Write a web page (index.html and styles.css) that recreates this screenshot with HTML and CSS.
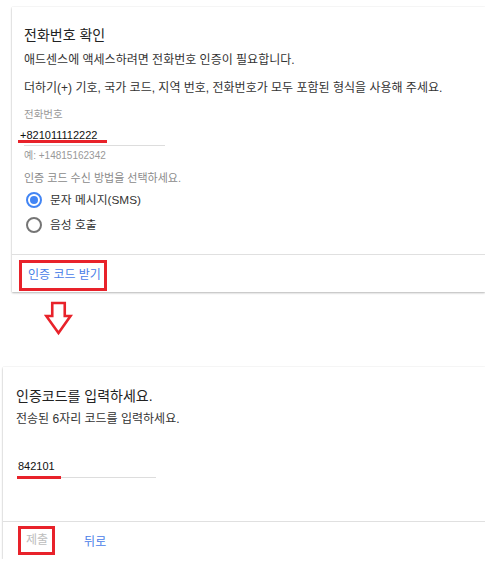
FILE: index.html
```html
<!DOCTYPE html>
<html lang="ko">
<head>
<meta charset="utf-8">
<title>전화번호 확인</title>
<link rel="stylesheet" href="styles.css">
</head>
<body>
  <section class="card card-phone">
    <div class="card-body">
      <h1 class="card-title">전화번호 확인</h1>
      <p class="text first">애드센스에 액세스하려면 전화번호 인증이 필요합니다.</p>
      <p class="text second">더하기(+) 기호, 국가 코드, 지역 번호, 전화번호가 모두 포함된 형식을 사용해 주세요.</p>
      <div class="field-label">전화번호</div>
      <div class="field field-phone"><span class="value mark-phone">+821011112222</span></div>
      <div class="hint">예: +14815162342</div>
      <div class="prompt">인증 코드 수신 방법을 선택하세요.</div>
      <div class="radio-row first-row"><span class="radio checked"></span><span class="radio-label">문자 메시지(SMS)</span></div>
      <div class="radio-row"><span class="radio"></span><span class="radio-label">음성 호출</span></div>
    </div>
    <div class="card-footer footer-phone">
      <span class="btn btn-primary boxed">인증 코드 받기</span>
    </div>
  </section>

  <svg class="arrow" width="30" height="37" viewBox="0 0 30 37">
    <polygon points="8.25,3 20.75,3 20.75,16 26.5,16 14.5,33 2.25,16 8.25,16" fill="#fff" stroke="#e8222a" stroke-width="2.6" stroke-linejoin="miter"/>
  </svg>

  <section class="card card-code">
    <div class="card-body body-code">
      <h1 class="card-title">인증코드를 입력하세요.</h1>
      <p class="text sub">전송된 6자리 코드를 입력하세요.</p>
      <div class="field field-code"><span class="value mark-code">842101</span></div>
    </div>
    <div class="card-footer footer-code">
      <span class="btn btn-disabled boxed boxed-small">제출</span>
      <span class="btn btn-primary back">뒤로</span>
    </div>
  </section>
</body>
</html>
```

FILE: styles.css
```css
html, body {
  margin: 0;
  padding: 0;
  overflow: hidden;
  background: #ffffff;
}

body {
  padding-top: 7px;
  font-family: "Liberation Sans", "Noto Sans CJK KR", sans-serif;
  color: #333333;
}

.card {
  background: #ffffff;
  box-shadow: 0 1px 2px rgba(0, 0, 0, 0.28), 0 0 1px rgba(0, 0, 0, 0.12);
}

.card-phone {
  margin-left: 12px;
}

.card-code {
  margin-left: 3px;
  margin-top: 30px;
}

.card-body {
  padding: 18px 12px 18px 12px;
  border-bottom: 1px solid #e0e0e0;
}

.card-title {
  margin: 0;
  font-size: 14px;
  line-height: 20px;
  font-weight: normal;
  color: #222222;
}

.text {
  margin: 0;
  font-size: 12px;
  line-height: 18px;
  color: #333333;
}

.text.first {
  margin-top: 6px;
}

.text.second {
  margin-top: 10px;
}

.field-label {
  margin-top: 10px;
  font-size: 10.5px;
  line-height: 14px;
  color: #9a9a9a;
}

.field {
  line-height: 9px;
  font-size: 11px;
  border-bottom: 1px solid #dddddd;
}

.field-phone {
  margin-top: 10px;
  width: 141px;
  padding-bottom: 2px;
}

.value {
  display: inline-block;
  vertical-align: top;
  color: #111111;
  font-family: "Liberation Sans", sans-serif;
  font-size: 11px;
}

.mark-phone {
  line-height: 9px;
  margin-left: -6px;
  padding: 0 10px 0 2px;
  border-bottom: 3px solid #e8222a;
}

.hint {
  margin-top: 3px;
  font-size: 10px;
  line-height: 14px;
  color: #999999;
}

.prompt {
  margin-top: 8px;
  font-size: 11px;
  line-height: 14px;
  color: #8a8a8a;
}

.radio-row {
  display: flex;
  align-items: center;
  height: 22px;
  margin-top: 3px;
}

.radio-row.first-row {
  margin-top: 4px;
}

.radio {
  box-sizing: border-box;
  width: 16px;
  height: 16px;
  margin-left: 2px;
  border-radius: 50%;
  border: 2px solid #757575;
  display: flex;
  align-items: center;
  justify-content: center;
}

.radio.checked {
  border-color: #4285f4;
}

.radio.checked::after {
  content: "";
  width: 8px;
  height: 8px;
  border-radius: 50%;
  background: #4285f4;
}

.radio-label {
  margin-left: 8px;
  font-size: 11.8px;
  line-height: 18px;
  color: #333333;
}

.card-footer {
  display: flex;
  align-items: center;
}

.footer-phone {
  padding: 5px 0 1px 7px;
}

.btn {
  font-size: 12px;
}

.btn-primary {
  color: #4a80e8;
}

.btn-disabled {
  color: #bdbdbd;
}

.boxed {
  border: 3px solid #e8222a;
  padding: 0 3px 0 6px;
  line-height: 25px;
}

.arrow {
  display: block;
  margin-left: 44px;
  margin-top: 8px;
}

.body-code {
  padding: 19px 13px 43px 13px;
}

.text.sub {
  margin-top: 4px;
}

.field-code {
  margin-top: 32px;
  margin-left: 1px;
  width: 139px;
  line-height: 12px;
}

.mark-code {
  line-height: 12px;
  padding: 0 6px 4px 1px;
  margin-bottom: -2px;
  border-bottom: 3px solid #e8222a;
}

.footer-code {
  padding: 4px 0 4px 15px;
}

.boxed-small {
  padding: 0 4px 0 5px;
  line-height: 23px;
}

.back {
  margin-left: 29px;
}
```
